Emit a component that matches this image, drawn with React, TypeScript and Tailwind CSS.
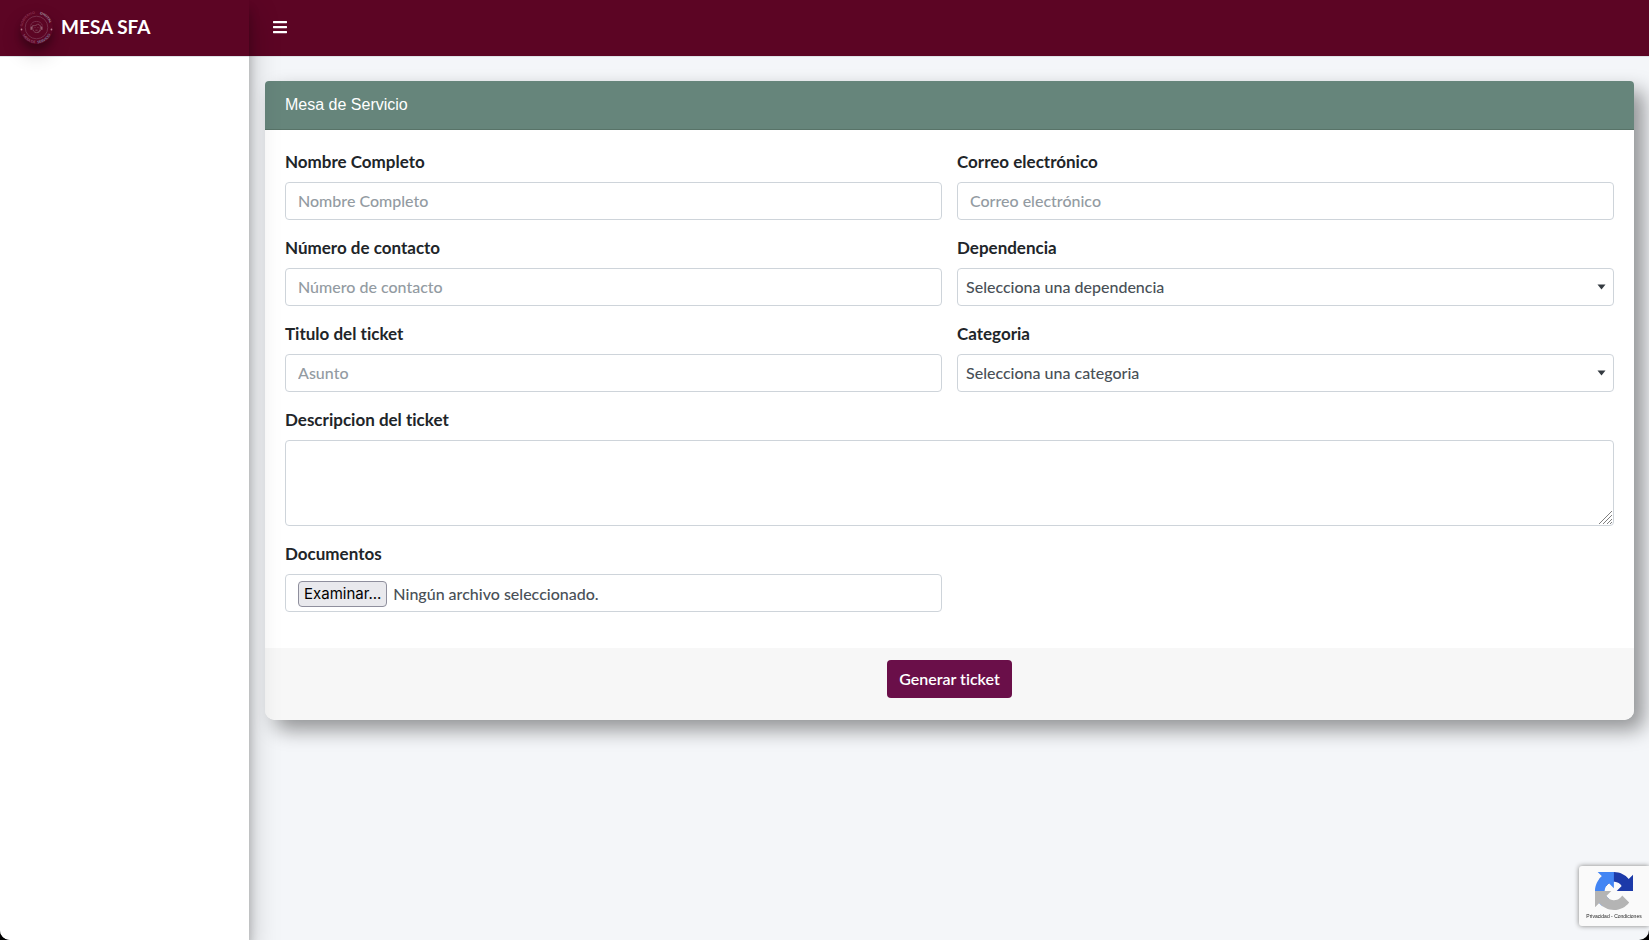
import React from "react";
import { FaBars } from "react-icons/fa";

const control =
  "block h-[38px] w-full rounded border border-[#ced4da] bg-white text-base leading-6 font-medium text-[#495057] placeholder:text-[#939ba2] placeholder:opacity-100 focus:outline-none focus:border-[#80bdff]";

function Field({ id, label, children }: { id: string; label: string; children: React.ReactNode }) {
  return (
    <div className="mb-4 min-w-0">
      <label htmlFor={id} className="mb-2 block text-[17px] leading-6 font-bold text-[#212529]">
        {label}
      </label>
      {children}
    </div>
  );
}

function TextField({ id, label, placeholder, type = "text" }: { id: string; label: string; placeholder: string; type?: string }) {
  return (
    <Field id={id} label={label}>
      <input id={id} type={type} placeholder={placeholder} className={control + " px-3 pb-[2px]"} />
    </Field>
  );
}

function SelectField({ id, label, option }: { id: string; label: string; option: string }) {
  return (
    <Field id={id} label={label}>
      <div className="relative">
        <select id={id} className={control + " appearance-none pl-2 pr-8"}>
          <option>{option}</option>
        </select>
        <svg className="pointer-events-none absolute top-4 right-2 h-[6px] w-[9px]" viewBox="0 0 9 6" aria-hidden="true">
          <path d="M.5.5h8l-4 5z" fill="#343a40" />
        </svg>
      </div>
    </Field>
  );
}

function Logo() {
  return (
    <svg viewBox="0 0 33 33" className="size-[33px] rounded-full shadow-[0_10px_20px_rgba(0,0,0,0.19),0_6px_6px_rgba(0,0,0,0.23)]" aria-hidden="true">
      <defs>
        <path id="ring-top" d="M2.6 16.5a13.9 13.9 0 0 1 27.8 0" />
        <path id="ring-bottom" d="M.6 16.5a15.9 15.9 0 0 0 31.8 0" />
      </defs>
      <g fill="none" stroke="#80405a" strokeWidth=".7">
        <circle cx="16.5" cy="16.5" r="11.3" />
        <path d="M10.6 14.5a6.3 6.3 0 0 1 11.8 0" />
        <path d="M12.6 17v-2.4c2.6.3 4.4-.4 5.4-1.8.6 1 1.4 1.6 2.4 1.8V17c0 2.4-1.6 4.6-3.9 4.6s-3.9-2.2-3.9-4.6zM20.6 19c-.4 1.6-1.6 2.4-3 2.4" stroke="#8d5a6c" />
        <path d="M11.2 15.4v3.4M21.8 15.4v3.4" stroke="#9b6c7c" strokeWidth="1.3" />
        <path d="M14.6 16.6h.8M17.6 16.6h.8M15.4 19.2h2.2" stroke="#8d5a6c" />
      </g>
      <circle cx="1.5" cy="18.5" r=".9" fill="#b57e8e" />
      <circle cx="31.5" cy="18.5" r=".9" fill="#b57e8e" />
      <g fontFamily="Lato, sans-serif" fontSize="3.6" fontWeight="900">
        <text fill="#87304f">
          <textPath href="#ring-top" startOffset="1">GOBIERNO</textPath>
        </text>
        <text fill="#a898a2">
          <textPath href="#ring-top" startOffset="25">DIGITAL</textPath>
        </text>
        <text fill="#8a4a68">
          <textPath href="#ring-bottom" startOffset="8">MESA DE</textPath>
        </text>
        <text fill="#7a7390">
          <textPath href="#ring-bottom" startOffset="26">SERVICIO</textPath>
        </text>
      </g>
    </svg>
  );
}

function Recaptcha() {
  return (
    <aside className="fixed right-0 bottom-[14px] flex h-[60px] w-[70px] flex-col items-center rounded-l-[3px] bg-[#fafafa] pt-[6px] shadow-[0_0_5px_gray]">
      <svg viewBox="0 0 64 64" className="size-[38px]" aria-hidden="true">
        <path d="M64 31.955a33 33 0 0 0-.037-1.379V4.605l-7.18 7.18C50.907 4.592 41.97 0 31.961 0 21.545 0 12.291 4.97 6.451 12.665l11.769 11.893a15.6 15.6 0 0 1 4.768-5.351c2.055-1.604 4.967-2.915 8.973-2.915.484 0 .857.057 1.132.163 4.963.392 9.266 3.131 11.799 7.107l-8.33 8.33L64 31.955" fill="#1c3aa9" />
        <path d="M31.862 0a33 33 0 0 0-1.379.037H4.512l7.18 7.18C4.499 13.093 0 22.03 0 32.039c0 10.416 4.877 19.67 12.572 25.51l11.893-11.769a15.6 15.6 0 0 1-5.351-4.768c-1.604-2.055-2.915-4.967-2.915-8.973 0-.484.057-.857.163-1.132.392-4.963 3.131-9.266 7.107-11.799l8.33 8.33L31.862 0" fill="#4285f4" />
        <path d="M0 32.045c.001.461.014.919.037 1.379v25.971l7.18-7.18C13.093 59.408 22.03 64 32.039 64c10.416 0 19.67-4.97 25.51-12.665L45.78 39.442a15.6 15.6 0 0 1-4.768 5.351c-2.055 1.604-4.967 2.915-8.973 2.915-.484 0-.857-.057-1.132-.163-4.963-.392-9.266-3.131-11.799-7.107l8.33-8.33L0 32.045" fill="#b4b4b4" />
      </svg>
      <p className="mt-[3px] font-['Liberation_Sans',sans-serif] text-[5px] leading-[6px] whitespace-nowrap text-[#222]">
        <a href="#privacidad">Privacidad</a> - <a href="#condiciones">Condiciones</a>
      </p>
    </aside>
  );
}

export default function App() {
  return (
    <div className="bg-black font-[Lato,sans-serif] [font-variant-ligatures:none]">
      <div className="flex min-h-screen overflow-hidden rounded-b-[10px] bg-[#f4f6f9]">
        <aside className="z-10 flex w-[249px] shrink-0 flex-col bg-white shadow-[0_14px_28px_rgba(0,0,0,0.25),0_10px_10px_rgba(0,0,0,0.22)]">
          <a href="#inicio" className="flex h-[57px] items-center gap-2 border-b border-[#dee2e6] bg-[#5c0524] pb-[2px] pl-5 text-[19px] font-bold text-white">
            <Logo />
            <span>MESA SFA</span>
          </a>
        </aside>
        <div className="min-w-0 flex-1">
          <nav className="flex h-[57px] items-center border-b border-[#dee2e6] bg-[#5c0524] px-6 pb-[2px]">
            <button type="button" aria-label="Menú" className="text-white">
              <FaBars className="h-4 w-[14px]" />
            </button>
          </nav>
          <main className="pt-6 pr-[15px] pl-4">
            <form className="overflow-hidden rounded-t rounded-b-[10px] bg-white shadow-[10px_10px_20px_rgba(0,0,0,0.4)]" onSubmit={(e) => e.preventDefault()}>
              <header className="border-b border-[#587368] bg-[#66857b] px-5 py-3">
                <h1 className="font-['Liberation_Sans',sans-serif] text-base leading-6 text-white">Mesa de Servicio</h1>
              </header>
              <div className="p-5">
                <div className="grid grid-cols-2 gap-x-[15px]">
                  <TextField id="nombre" label="Nombre Completo" placeholder="Nombre Completo" />
                  <TextField id="correo" label="Correo electrónico" placeholder="Correo electrónico" type="email" />
                  <TextField id="numero" label="Número de contacto" placeholder="Número de contacto" type="tel" />
                  <SelectField id="dependencia" label="Dependencia" option="Selecciona una dependencia" />
                  <TextField id="titulo" label="Titulo del ticket" placeholder="Asunto" />
                  <SelectField id="categoria" label="Categoria" option="Selecciona una categoria" />
                  <div className="col-span-2">
                    <Field id="descripcion" label="Descripcion del ticket">
                      <div className="relative">
                        <textarea id="descripcion" className="block h-[86px] w-full resize-none rounded border border-[#ced4da] px-3 py-[6px] text-base leading-6 font-medium text-[#495057] focus:outline-none" />
                        <svg className="pointer-events-none absolute right-[2px] bottom-[2px] size-[13px]" viewBox="0 0 13 13" stroke="#808080" aria-hidden="true">
                          <path d="M0 13 13 0M4 13l9-9M8 13l5-5M11 13l2-2" />
                        </svg>
                      </div>
                    </Field>
                  </div>
                  <Field id="documentos" label="Documentos">
                    <label htmlFor="documentos" className={control + " flex! items-center gap-[6px] px-3 pt-[2px]"}>
                      <input id="documentos" type="file" className="sr-only" />
                      <span className="rounded border border-[#8f8f9d] bg-[#e9e9ed] px-[5px] font-[Inter,sans-serif] text-[15px] leading-6 font-normal text-black">Examinar...</span>
                      <span>Ningún archivo seleccionado.</span>
                    </label>
                  </Field>
                </div>
              </div>
              <footer className="flex justify-center bg-[#f7f7f7] pt-3 pb-[22px]">
                <button type="submit" className="h-[38px] rounded bg-[#6a0f49] px-3 text-base leading-6 font-semibold text-white">
                  Generar ticket
                </button>
              </footer>
            </form>
          </main>
        </div>
      </div>
      <Recaptcha />
    </div>
  );
}
